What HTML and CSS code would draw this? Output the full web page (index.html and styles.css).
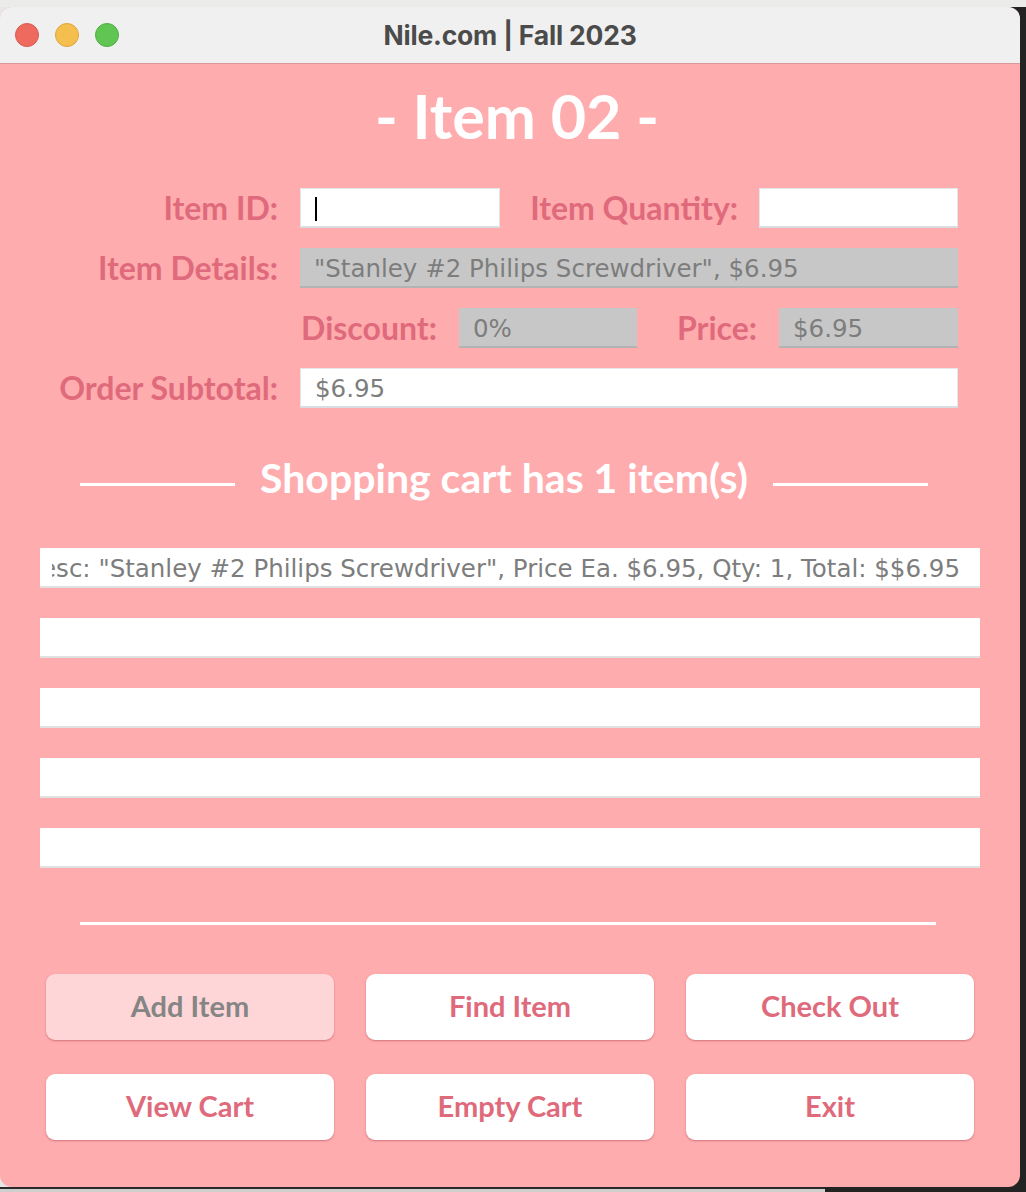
FILE: index.html
```html
<!DOCTYPE html>
<html lang="en">
<head>
<meta charset="utf-8">
<title>Nile.com | Fall 2023</title>
<link rel="stylesheet" href="styles.css">
</head>
<body>
<div class="desk-top"></div>
<div class="desk-mid">
  <div class="window">
    <div class="titlebar">
      <div class="lights">
        <span class="light red"></span>
        <span class="light yellow"></span>
        <span class="light green"></span>
      </div>
      <div class="wtitle">Nile.com | Fall 2023</div>
    </div>
    <div class="content">
      <h1 class="item-title">- Item 02 -</h1>

      <div class="form">
        <label class="lbl">Item ID:</label>
        <div class="split split-a">
          <div class="field white w200"><span class="caret"></span></div>
          <label class="lbl grow">Item Quantity:</label>
          <div class="field white w199"></div>
        </div>

        <label class="lbl">Item Details:</label>
        <div class="field gray">"Stanley #2 Philips Screwdriver", $6.95</div>

        <div></div>
        <div class="split split-b">
          <label class="lbl">Discount:</label>
          <div class="field gray w178">0%</div>
          <label class="lbl grow">Price:</label>
          <div class="field gray w179">$6.95</div>
        </div>

        <label class="lbl">Order Subtotal:</label>
        <div class="field white">$6.95</div>
      </div>

      <div class="section">
        <span class="rule"></span>
        <h2 class="section-title">Shopping cart has 1 item(s)</h2>
        <span class="rule"></span>
      </div>

      <div class="cart">
        <div class="cart-row"><div class="clip"><span class="cart-text">Item 1 - SKU: 02, Desc: "Stanley #2 Philips Screwdriver", Price Ea. $6.95, Qty: 1, Total: $$6.95</span></div></div>
        <div class="cart-row"></div>
        <div class="cart-row"></div>
        <div class="cart-row"></div>
        <div class="cart-row"></div>
      </div>

      <div class="divider"></div>

      <div class="buttons">
        <button class="btn disabled">Add Item</button>
        <button class="btn">Find Item</button>
        <button class="btn">Check Out</button>
        <button class="btn">View Cart</button>
        <button class="btn">Empty Cart</button>
        <button class="btn">Exit</button>
      </div>
    </div>
  </div>
  <div class="desk-right"></div>
</div>
<div class="desk-bottom">
  <div class="bl"></div>
  <div class="br"></div>
</div>
</body>
</html>
```

FILE: styles.css
```css
* { box-sizing: border-box; }

html, body {
  margin: 0;
  padding: 0;
}

body {
  width: 1026px;
  height: 1192px;
  overflow: hidden;
  background: #ebebe9;
  font-family: "Lato", "Noto Sans", sans-serif;
}

.desk-top {
  height: 7px;
  background: #ebebe9;
}

.desk-mid {
  display: flex;
  height: 1180px;
  background: linear-gradient(to right, #e6e6e4 50%, #232323 50%);
}

.desk-right {
  width: 6px;
  background: #232323;
}

.desk-bottom {
  display: flex;
  height: 5px;
}
.desk-bottom .bl {
  width: 825px;
  background: #cfcfcf;
  border-top: 2px solid #2a2a2a;
}
.desk-bottom .br {
  flex: 1;
  background: #232323;
}

.window {
  width: 1020px;
  height: 1180px;
  background: #ffacaf;
  border-radius: 12px;
  overflow: hidden;
  display: flex;
  flex-direction: column;
}

/* ---------- title bar ---------- */
.titlebar {
  position: relative;
  height: 57px;
  background: #f0f0f0;
  border-bottom: 1px solid #d9999b;
  display: flex;
  align-items: center;
  justify-content: center;
}

.lights {
  position: absolute;
  left: 15px;
  top: 16px;
  display: flex;
  gap: 16px;
}

.light {
  width: 24px;
  height: 24px;
  border-radius: 50%;
  display: block;
}
.light.red { background: #ee6a5f; border: 1px solid #d85a50; }
.light.yellow { background: #f5bf4f; border: 1px solid #dca63c; }
.light.green { background: #61c554; border: 1px solid #4fae43; }

.wtitle {
  font-family: "Inter", "Liberation Sans", sans-serif;
  font-weight: 700;
  font-size: 26.5px;
  color: #4b4b4b;
  letter-spacing: -0.2px;
  margin-left: 0;
}

/* ---------- content ---------- */
.content {
  flex: 1;
  display: flex;
  flex-direction: column;
}

.item-title {
  margin: 21px 0 0;
  height: 62px;
  font-size: 61px;
  line-height: 62px;
  font-weight: 700;
  color: #ffffff;
  text-align: center;
  padding-left: 14px;
}

.form {
  margin-top: 41px;
  display: grid;
  grid-template-columns: 278px 658px;
  grid-auto-rows: 40px;
  column-gap: 22px;
  row-gap: 20px;
}

.lbl {
  font-size: 32px;
  line-height: 40px;
  font-weight: 700;
  color: #df6a7b;
  text-align: right;
  white-space: nowrap;
}

.split {
  display: flex;
  align-items: stretch;
}
.split-a .lbl.grow { flex: 1; padding-right: 21px; }
.split-b { justify-content: flex-end; }
.split-b .lbl { padding-right: 22px; }
.split-b .lbl.grow { flex: 0 0 auto; padding-left: 40px; }

.field {
  height: 40px;
  font-family: "DejaVu Sans", "Liberation Sans", sans-serif;
  font-size: 24.5px;
  color: #7d7d7d;
  display: flex;
  align-items: center;
  padding: 2px 14px 0;
  white-space: nowrap;
  overflow: hidden;
}
.field.white {
  background: #ffffff;
  border: 1px solid #e3e6ea;
  border-bottom: 2px solid #d9dde1;
}
.field.gray {
  background: #c7c7c7;
  border-bottom: 2px solid #b3b3b3;
}
.w200 { width: 200px; }
.w199 { width: 199px; }
.w178 { width: 178px; }
.w179 { width: 179px; }

.caret {
  display: block;
  width: 2px;
  height: 24px;
  background: #000;
}

/* ---------- section heading ---------- */
.section {
  margin: 48px 0 0 80px;
  width: 848px;
  display: flex;
  align-items: flex-start;
  gap: 25px;
}
.rule {
  flex: 1;
  height: 3px;
  margin-top: 27px;
  background: #ffffff;
}
.section-title {
  margin: 0;
  height: 43px;
  font-size: 41px;
  line-height: 43px;
  font-weight: 700;
  color: #ffffff;
  white-space: nowrap;
}

/* ---------- cart ---------- */
.cart {
  margin: 49px 0 0 40px;
  width: 940px;
  display: flex;
  flex-direction: column;
  gap: 30px;
}
.cart-row {
  height: 40px;
  background: #ffffff;
  border-bottom: 2px solid #e1e1e1;
  display: flex;
  align-items: center;
  padding: 2px 20px 0 12px;
}
.clip {
  flex: 1;
  overflow: hidden;
  display: flex;
  justify-content: flex-end;
}
.cart-text {
  flex: none;
  font-family: "DejaVu Sans", "Liberation Sans", sans-serif;
  font-size: 24.5px;
  color: #7d7d7d;
  white-space: nowrap;
}

/* ---------- divider ---------- */
.divider {
  margin: 54px 0 0 80px;
  width: 856px;
  height: 3px;
  background: #ffffff;
}

/* ---------- buttons ---------- */
.buttons {
  margin: 49px 0 0 46px;
  display: grid;
  grid-template-columns: repeat(3, 288px);
  grid-auto-rows: 66px;
  column-gap: 32px;
  row-gap: 34px;
}
.btn {
  font-family: "Lato", "Noto Sans", sans-serif;
  font-size: 29px;
  font-weight: 700;
  color: #df6a7b;
  background: #ffffff;
  border: none;
  border-radius: 9px;
  box-shadow: 0 1px 2px rgba(170, 70, 80, 0.55);
  padding: 0 0 3px;
}
.btn.disabled {
  background: #ffd6d8;
  color: #858585;
}
```
